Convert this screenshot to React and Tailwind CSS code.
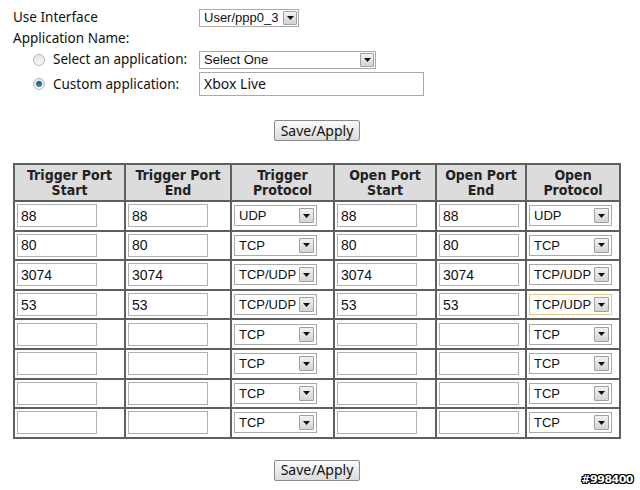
import React from "react";

const rows = [
  ["88", "88", "UDP", "88", "88", "UDP"],
  ["80", "80", "TCP", "80", "80", "TCP"],
  ["3074", "3074", "TCP/UDP", "3074", "3074", "TCP/UDP"],
  ["53", "53", "TCP/UDP", "53", "53", "TCP/UDP"],
  ["", "", "TCP", "", "", "TCP"],
  ["", "", "TCP", "", "", "TCP"],
  ["", "", "TCP", "", "", "TCP"],
  ["", "", "TCP", "", "", "TCP"],
];

const headers = [
  ["Trigger Port", "Start"],
  ["Trigger Port", "End"],
  ["Trigger", "Protocol"],
  ["Open Port", "Start"],
  ["Open Port", "End"],
  ["Open", "Protocol"],
];

const colWidths = ["w-[111px]", "w-[106px]", "w-[103px]", "w-[102px]", "w-[90px]", "w-[94px]"];

const Arrow = ({ size = "w-[15px] h-[15px]" }) => (
  <div className={`${size} flex items-center justify-center border border-[#a0a0a0] bg-gradient-to-b from-[#f2f2f2] to-[#d4d4d4] rounded-[1px]`}>
    <svg width="7" height="4" viewBox="0 0 7 4">
      <path d="M0 0h7L3.5 4z" fill="#111" />
    </svg>
  </div>
);

const FakeSelect = ({ value, width, focus }) => (
  <div
    className={`${width} h-[21px] flex items-center justify-between bg-white border pl-[4px] pr-[2px] ${
      focus ? "border-[#e2c98c]" : "border-[#a9a9a9]"
    }`}
  >
    <span className="text-[13px] text-[#111] leading-none">{value}</span>
    <Arrow />
  </div>
);

const FakeInput = ({ value, width }) => (
  <div className={`${width} h-[23px] flex items-center bg-white border border-[#b0b0b0] px-[3px]`}>
    <span className="text-[14px] text-[#111] leading-none">{value}</span>
  </div>
);

const Radio = ({ checked }) => (
  <div className="w-[12px] h-[12px] rounded-full border border-[#b8b8b8] bg-gradient-to-b from-[#e6e6e6] to-[#f8f8f8] flex items-center justify-center">
    {checked && <div className="w-[6px] h-[6px] rounded-full bg-gradient-to-b from-[#1d5a7a] to-[#3d8db5]" />}
  </div>
);

const Button = () => (
  <div className="w-[86px] h-[21px] flex items-center justify-center border border-[#8a8a8a] rounded-[2px] bg-gradient-to-b from-[#fafafa] to-[#dcdcdc] text-[14px] text-[#111] font-['Noto_Sans',sans-serif] leading-none">
    Save/Apply
  </div>
);

export default function App() {
  return (
    <div className="relative w-[640px] h-[490px] bg-white overflow-hidden font-['Liberation_Sans',Arial,sans-serif]">
      <div className="pl-[13px] pt-[8px] font-['Noto_Sans',sans-serif] text-[13.5px] text-[#111]">
        <div className="flex items-center h-[19px]">
          <div className="w-[186px]">Use Interface</div>
          <div className="w-[100px] h-[18px] flex items-center justify-between bg-white border border-[#a9a9a9] pl-[4px] pr-[1px] font-['Liberation_Sans',sans-serif]">
            <span className="text-[13px] leading-none">User/ppp0_3</span>
            <Arrow size="w-[14px] h-[14px]" />
          </div>
        </div>
        <div className="h-[21px] flex items-center mt-[1px]">Application Name:</div>
        <div className="flex items-center h-[19px] mt-[1px]">
          <div className="w-[40px] flex justify-end pr-[8px]">
            <Radio />
          </div>
          <div className="w-[146px]">Select an application:</div>
          <div className="w-[177px] h-[18px] flex items-center justify-between bg-white border border-[#a9a9a9] pl-[4px] pr-[1px] font-['Liberation_Sans',sans-serif]">
            <span className="text-[13px] leading-none">Select One</span>
            <Arrow size="w-[14px] h-[14px]" />
          </div>
        </div>
        <div className="flex items-center h-[24px] mt-[3px]">
          <div className="w-[40px] flex justify-end pr-[8px]">
            <Radio checked />
          </div>
          <div className="w-[146px]">Custom application:</div>
          <div className="w-[225px] h-[24px] flex items-center bg-white border border-[#a9a9a9] px-[4px]">
            <span className="text-[14px] leading-none">Xbox Live</span>
          </div>
        </div>
      </div>

      <div className="flex justify-center pl-[2px] mt-[24px] w-[632px]">
        <Button />
      </div>

      <div className="pl-[13px] mt-[22px]">
        <table className="table-fixed border-collapse border-2 border-[#5f5f5f] w-[606px]">
          <thead>
            <tr className="bg-[#dcdcdc] h-[37px]">
              {headers.map((h, i) => (
                <th
                  key={i}
                  className={`${colWidths[i]} border-2 border-[#5f5f5f] p-0 text-center font-bold text-[14px] leading-[15px] text-[#222] font-['DejaVu_Sans_Condensed','DejaVu_Sans',sans-serif]`}
                >
                  {h[0]}
                  <br />
                  {h[1]}
                </th>
              ))}
            </tr>
          </thead>
          <tbody>
            {rows.map((r, ri) => (
              <tr key={ri} className="h-[29.6px]">
                {r.map((v, ci) => (
                  <td key={ci} className="border-2 border-[#5f5f5f] px-[2px] py-0 align-middle">
                    {ci === 2 || ci === 5 ? (
                      <FakeSelect value={v} width="w-[83px]" focus={ri === 3 && ci === 5} />
                    ) : (
                      <FakeInput value={v} width="w-[80px]" />
                    )}
                  </td>
                ))}
              </tr>
            ))}
          </tbody>
        </table>
      </div>

      <div className="flex justify-center pl-[2px] mt-[21px] w-[632px]">
        <Button />
      </div>

      <div className="absolute right-[7px] bottom-[2px] text-[11px] font-bold text-white font-['DejaVu_Sans',sans-serif] tracking-[-0.5px] [text-shadow:1px_0_0_#000,-1px_0_0_#000,0_1px_0_#000,0_-1px_0_#000,1px_1px_0_#000,-1px_-1px_0_#000,1px_-1px_0_#000,-1px_1px_0_#000]">
        #998400
      </div>
    </div>
  );
}
